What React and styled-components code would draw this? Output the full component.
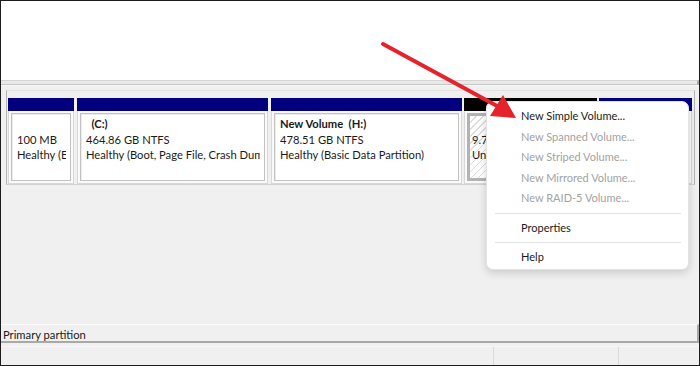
import React from 'react';
import styled, { createGlobalStyle } from 'styled-components';

const GlobalStyle = createGlobalStyle`
  html, body {
    margin: 0;
    padding: 0;
    background: #fff;
  }
  * {
    box-sizing: border-box;
  }
`;

const Frame = styled.div`
  position: relative;
  width: 700px;
  height: 366px;
  border: 1px solid #1c1c1c;
  background: #f0f0f0;
  display: flex;
  flex-direction: column;
  overflow: hidden;
  font-family: Lato, 'Noto Sans', sans-serif;
  font-size: 11.2px;
  color: #1a1a1a;
`;

const ListPane = styled.div`
  height: 79px;
  background: #fff;
`;

const Splitter = styled.div`
  height: 5px;
  background: #e9e9e9;
  border-top: 1px solid #d4d4d4;
  border-bottom: 1px solid #c6c6c6;
  border-right: 2px solid #a9a9a9;
`;

const DiskPane = styled.div`
  flex: 1;
  display: flex;
  flex-direction: column;
  padding: 0 4px 0 5px;
  border-top: 1px solid #f8f8f8;
`;

const DiskRow = styled.div`
  display: flex;
  height: 95px;
  margin-top: 4px;
  padding: 7px 0 0 1px;
  border-left: 1px solid #b4b4b4;
  border-top: 1px solid #e2e2e2;
  border-bottom: 1px solid #d2d2d2;
  border-right: 1px solid #b4b4b4;
`;

const Segment = styled.div`
  width: ${(p) => p.$w}px;
  margin-right: ${(p) => p.$gap}px;
  display: flex;
  flex-direction: column;
  flex-shrink: 0;
`;

const Header = styled.div`
  height: 13px;
  background: ${(p) => (p.$free ? '#000' : '#00007f')};
`;

const Body = styled.div`
  flex: 1;
  padding: 2px;
  background: #fafafa;
  border: 1px solid #d8d8d8;
  border-top: none;
`;

const Inner = styled.div`
  height: 100%;
  padding: 2px 4px 0 5px;
  background: #fff;
  border: 1px solid #c2c2c2;
  box-shadow: inset 1px 1px 0 #ececec;
  line-height: 15.5px;
  white-space: pre;
  overflow: hidden;
`;

const FreeInner = styled(Inner)`
  border: 3px solid #b3b3b3;
  box-shadow: none;
  padding: 0 2px 0 2px;
  background: repeating-linear-gradient(
    135deg,
    #ffffff 0px,
    #ffffff 4px,
    #dcdcdc 4px,
    #dcdcdc 5px
  );
`;

const Name = styled.div`
  font-weight: 700;
`;

const Line = styled.div`
  height: 15.5px;
  overflow: hidden;
`;

const Legend = styled.div`
  margin-top: auto;
  height: 19px;
  margin-right: -4px;
  margin-left: -5px;
  padding: 2px 0 0 2px;
  line-height: 16px;
  border-top: 1px solid #fbfbfb;
  border-bottom: 2px solid #a9a9a9;
  border-right: 2px solid #a9a9a9;
`;

const StatusBar = styled.div`
  height: 19px;
  margin: 3px -4px 0 -5px;
  display: grid;
  grid-template-columns: 492px 125px 1fr;
  border-top: 1px solid #f8f8f8;
`;

const StatusCell = styled.div`
  border-left: ${(p) => (p.$first ? 'none' : '1px solid #dadada')};
`;

const Menu = styled.div`
  position: absolute;
  left: 485px;
  top: 100px;
  width: 203px;
  padding: 4px 0 1px;
  background: #fff;
  border: 1px solid #e3e3e3;
  border-radius: 7px;
  box-shadow: 0 3px 8px rgba(0, 0, 0, 0.16);
  font-size: 11px;
  z-index: 2;
`;

const MenuItem = styled.div`
  height: 20.5px;
  line-height: 20.5px;
  padding-left: 34px;
  color: ${(p) => (p.$disabled ? '#a2a2a2' : '#1a1a1a')};
`;

const MenuSep = styled.div`
  height: 1px;
  margin: 4px 7px 4px 8px;
  background: #e3e3e3;
`;

const ArrowLayer = styled.svg`
  position: absolute;
  left: -1px;
  top: -1px;
  width: 700px;
  height: 366px;
  pointer-events: none;
  z-index: 3;
`;

const segments = [
  { w: 66, gap: 3, lines: ['', '100 MB', 'Healthy (EFI System Partition)'] },
  { w: 191, gap: 3, name: '  (C:)', lines: ['464.86 GB NTFS', 'Healthy (Boot, Page File, Crash Dump, Basic Data Partition)'] },
  { w: 191, gap: 2, name: 'New Volume  (H:)', lines: ['478.51 GB NTFS', 'Healthy (Basic Data Partition)'] },
  { w: 133, gap: 2, free: true, lines: ['', '9.77 GB', 'Unallocated'] },
  { w: 93, gap: 0, lines: ['', '', ''] },
];

const menuItems = [
  { label: 'New Simple Volume...' },
  { label: 'New Spanned Volume...', disabled: true },
  { label: 'New Striped Volume...', disabled: true },
  { label: 'New Mirrored Volume...', disabled: true },
  { label: 'New RAID-5 Volume...', disabled: true },
  { sep: true },
  { label: 'Properties' },
  { sep: true },
  { label: 'Help' },
];

const SegmentBox = ({ seg }) => {
  const Box = seg.free ? FreeInner : Inner;
  return (
    <Segment $w={seg.w} $gap={seg.gap}>
      <Header $free={seg.free} />
      <Body>
        <Box>
          {seg.name && <Name>{seg.name}</Name>}
          {seg.lines.map((l, i) => (
            <Line key={i}>{l}</Line>
          ))}
        </Box>
      </Body>
    </Segment>
  );
};

const App = () => (
  <Frame>
    <GlobalStyle />
    <ListPane />
    <Splitter />
    <DiskPane>
      <DiskRow>
        {segments.map((s, i) => (
          <SegmentBox key={i} seg={s} />
        ))}
      </DiskRow>
      <Legend>Primary partition</Legend>
      <StatusBar>
        <StatusCell $first />
        <StatusCell />
        <StatusCell />
      </StatusBar>
    </DiskPane>
    <Menu>
      {menuItems.map((m, i) =>
        m.sep ? (
          <MenuSep key={i} />
        ) : (
          <MenuItem key={i} $disabled={m.disabled}>
            {m.label}
          </MenuItem>
        )
      )}
    </Menu>
    <ArrowLayer viewBox="0 0 700 366">
      <line x1="383" y1="44" x2="499" y2="107" stroke="#e5232b" strokeWidth="4" strokeLinecap="round" />
      <polygon points="490,116 503,95 516,118" fill="#e5232b" />
    </ArrowLayer>
  </Frame>
);

export default App;
